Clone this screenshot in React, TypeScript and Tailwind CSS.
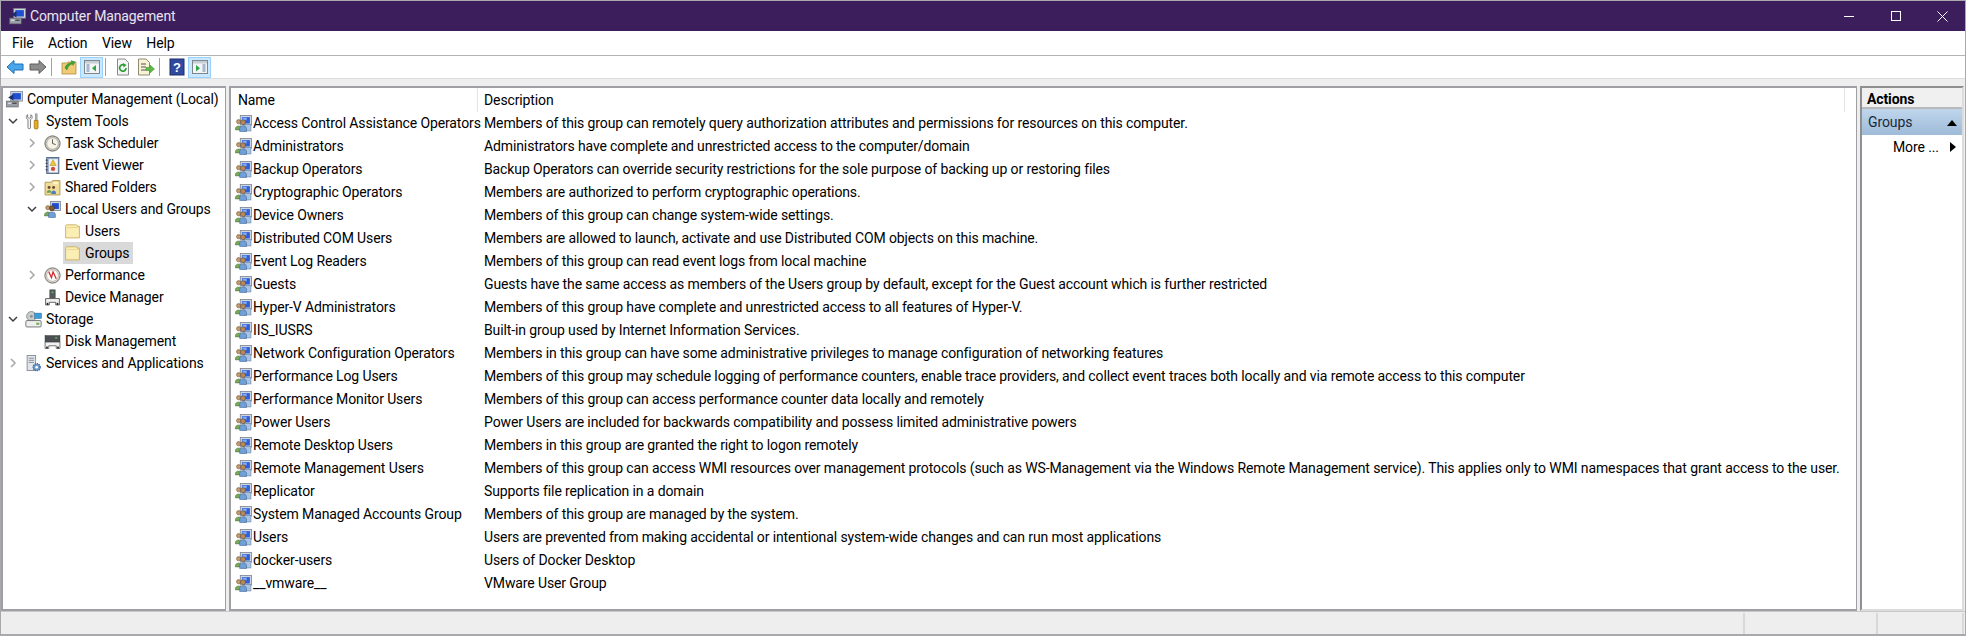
import React from "react";

const S = 17;

const GroupIcon = () => (
  <svg width={S} height={S} viewBox="0 0 16 16" className="shrink-0">
    <rect x="5" y="0.5" width="10.5" height="9" fill="#cfd6e0" stroke="#7f8794" strokeWidth="0.8" />
    <rect x="6.5" y="2" width="7.5" height="6" fill="#2f5fd8" />
    <rect x="7" y="2.5" width="4" height="2.5" fill="#7fa8f5" />
    <rect x="8.5" y="9" width="6.5" height="6" fill="#a9c4e4" stroke="#6d87a8" strokeWidth="0.6" />
    <circle cx="3.4" cy="6.3" r="2" fill="#c39a6b" stroke="#6e5136" strokeWidth="0.5" />
    <path d="M0.3 13 C0.3 9.5 6.6 9.5 6.6 13 V14 H0.3Z" fill="#78a85a" stroke="#4f7238" strokeWidth="0.5" />
    <circle cx="7.6" cy="6.8" r="2.3" fill="#b98a5a" stroke="#5d4329" strokeWidth="0.5" />
    <path d="M4.4 15.5 V12.5 C4.4 9.6 10.8 9.6 10.8 12.5 V15.5Z" fill="#6fa0d8" stroke="#3c5f8c" strokeWidth="0.5" />
  </svg>
);

const ComputerIcon = () => (
  <svg width={S} height={S} viewBox="0 0 16 16" className="shrink-0">
    <rect x="4.5" y="0.5" width="11" height="9" fill="#cfd6e0" stroke="#7f8794" strokeWidth="0.8" />
    <rect x="6" y="2" width="8" height="6" fill="#1f4fd0" />
    <path d="M2 6 L7 3 L7 9 Z" fill="#1d2f6b" />
    <rect x="0.5" y="9.5" width="11" height="5.5" fill="#9aa0a8" stroke="#55585e" strokeWidth="0.6" />
    <rect x="2" y="11" width="3" height="1" fill="#eee" />
    <rect x="6" y="11" width="4" height="1" fill="#333" />
  </svg>
);

const ToolsIcon = () => (
  <svg width={S} height={S} viewBox="0 0 16 16" className="shrink-0">
    <path d="M2.5 1.5 L2.5 4 L4 5 L5.5 4 L5.5 1.5 C7.5 3 7 5.5 5.2 6.2 V14 C5.2 15 2.8 15 2.8 14 V6.2 C1 5.5 0.5 3 2.5 1.5Z" fill="#f4f4f4" stroke="#6d6d6d" strokeWidth="0.8" />
    <rect x="9.6" y="0.8" width="1.8" height="6" fill="#aeb4ba" stroke="#6d6d6d" strokeWidth="0.4" />
    <path d="M8.7 7 H12.3 V14.2 C12.3 15.4 8.7 15.4 8.7 14.2Z" fill="#e9ad17" stroke="#8a6208" strokeWidth="0.6" />
  </svg>
);

const ClockIcon = () => (
  <svg width={S} height={S} viewBox="0 0 16 16" className="shrink-0">
    <circle cx="8" cy="8" r="7.2" fill="#c8c3b4" stroke="#6f6f6f" strokeWidth="0.9" />
    <circle cx="8" cy="8" r="5.4" fill="#f7f3e6" stroke="#9a9a9a" strokeWidth="0.5" />
    <path d="M8 4 V8 L11 9" fill="none" stroke="#555" strokeWidth="0.9" />
  </svg>
);

const EventIcon = () => (
  <svg width={S} height={S} viewBox="0 0 16 16" className="shrink-0">
    <rect x="2.5" y="0.5" width="11.5" height="15" fill="#8fa7c6" stroke="#4c5f7a" strokeWidth="0.8" />
    <rect x="4.5" y="2" width="8.5" height="12.5" fill="#f3f3f3" />
    <path d="M1.5 3 H3.5 M1.5 6 H3.5 M1.5 9 H3.5 M1.5 12 H3.5" stroke="#333" strokeWidth="0.8" />
    <path d="M8.5 2.5 L11.5 8 H5.5Z" fill="#f1c232" stroke="#a07c10" strokeWidth="0.4" />
    <circle cx="8.5" cy="11.2" r="2" fill="#d04a3f" />
  </svg>
);

const SharedIcon = () => (
  <svg width={S} height={S} viewBox="0 0 16 16" className="shrink-0">
    <path d="M1 3 H7 L8 1.5 H15 V15 H1Z" fill="#f0dc9a" stroke="#a88f4a" strokeWidth="0.8" />
    <rect x="9" y="3" width="4" height="2" fill="#fff6d0" />
    <circle cx="4.8" cy="8" r="1.4" fill="#6c4a2a" />
    <circle cx="9" cy="8" r="1.4" fill="#6c4a2a" />
    <path d="M2.5 13 C2.5 9.5 7 9.5 7 13Z" fill="#6da34f" />
    <path d="M6.8 14 C6.8 9.8 11.4 9.8 11.4 14Z" fill="#4b7fc0" />
  </svg>
);

const UsersGroupsIcon = () => (
  <svg width={S} height={S} viewBox="0 0 16 16" className="shrink-0">
    <rect x="6" y="0.5" width="9.5" height="8.5" fill="#cfd6e0" stroke="#7f8794" strokeWidth="0.8" />
    <rect x="7.5" y="2" width="6.5" height="5.5" fill="#1f4fd0" />
    <circle cx="3.6" cy="6.3" r="2" fill="#c39a6b" stroke="#6e5136" strokeWidth="0.5" />
    <path d="M0.5 13 C0.5 9.5 6.8 9.5 6.8 13 V14 H0.5Z" fill="#78a85a" stroke="#4f7238" strokeWidth="0.5" />
    <circle cx="7.5" cy="6.8" r="2.4" fill="#7b5a3a" stroke="#4c3722" strokeWidth="0.5" />
    <path d="M4.3 15.5 V12.5 C4.3 9.6 10.7 9.6 10.7 12.5 V15.5Z" fill="#6fa0d8" stroke="#3c5f8c" strokeWidth="0.5" />
  </svg>
);

const FolderIcon = () => (
  <svg width={S} height={S} viewBox="0 0 16 16" className="shrink-0">
    <path d="M1.5 3 C1.5 2 2 1.7 3 1.7 H11 C12 1.7 12.5 2 12.5 3 H14.5 V14 H1.5Z" fill="#fbeeb4" stroke="#c8ab5b" strokeWidth="0.8" />
    <path d="M2.2 4.2 H13.8" stroke="#e4cc80" strokeWidth="0.6" />
  </svg>
);

const PerfIcon = () => (
  <svg width={S} height={S} viewBox="0 0 16 16" className="shrink-0">
    <circle cx="8" cy="8" r="7.2" fill="#d9d3c6" stroke="#6f6f6f" strokeWidth="0.9" />
    <circle cx="8" cy="8" r="5.4" fill="#fbfbfb" stroke="#a0a0a0" strokeWidth="0.5" />
    <path d="M4.5 4.5 L7 10 L8.5 4.5 L11.5 11" fill="none" stroke="#d22d2d" strokeWidth="1.2" />
  </svg>
);

const DeviceIcon = () => (
  <svg width={S} height={S} viewBox="0 0 16 16" className="shrink-0">
    <rect x="5.5" y="0.8" width="5" height="8" fill="#555a5e" stroke="#2f3336" strokeWidth="0.5" />
    <rect x="7.2" y="2.4" width="1.6" height="1.4" fill="#62c662" />
    <path d="M1.5 15 V9 H14.5 V15 H11 V12.5 H5 V15Z" fill="#f2f2f2" stroke="#4d4d4d" strokeWidth="0.8" />
    <rect x="2.5" y="13" width="1.6" height="2" fill="#222" />
    <rect x="11.9" y="13" width="1.6" height="2" fill="#222" />
  </svg>
);

const StorageIcon = () => (
  <svg width={S} height={S} viewBox="0 0 16 16" className="shrink-0">
    <circle cx="6" cy="5" r="4.5" fill="#c8ccc9" stroke="#7a7f7c" strokeWidth="0.7" />
    <circle cx="6" cy="5" r="1.3" fill="#8a8f8c" />
    <rect x="9" y="2" width="6.5" height="5" fill="#3c9bd8" stroke="#2b6f9c" strokeWidth="0.5" />
    <rect x="0.8" y="9" width="14.4" height="6" rx="1" fill="#eef0ee" stroke="#666" strokeWidth="0.8" />
    <rect x="10.5" y="11" width="3" height="2" fill="#79b25f" />
  </svg>
);

const DiskIcon = () => (
  <svg width={S} height={S} viewBox="0 0 16 16" className="shrink-0">
    <rect x="1" y="2.5" width="14" height="6" fill="#4a4f52" stroke="#2f3336" strokeWidth="0.5" />
    <rect x="10.5" y="4" width="2" height="1.2" fill="#62c662" />
    <path d="M1 8.5 H15 V14.5 H11.5 V12 H4.5 V14.5 H1Z" fill="#f2f2f2" stroke="#4d4d4d" strokeWidth="0.7" />
    <rect x="2" y="12.8" width="1.6" height="1.7" fill="#222" />
    <rect x="12.4" y="12.8" width="1.6" height="1.7" fill="#222" />
  </svg>
);

const ServicesIcon = () => (
  <svg width={S} height={S} viewBox="0 0 16 16" className="shrink-0">
    <rect x="2" y="0.5" width="8" height="14" fill="#e3e6ea" stroke="#7b838c" strokeWidth="0.8" />
    <path d="M3.5 3 H8.5 M3.5 5 H8.5 M3.5 7 H8.5" stroke="#7b838c" strokeWidth="0.8" />
    <circle cx="11" cy="11.5" r="3.3" fill="#6f9fd0" stroke="#3c6594" strokeWidth="1.2" strokeDasharray="1.2 0.7" />
    <circle cx="11" cy="11.5" r="1.2" fill="#fff" />
  </svg>
);

const Chevron = ({ open, hidden }: { open?: boolean; hidden?: boolean }) => (
  <span className="w-4 h-4 shrink-0 flex items-center justify-center">
    {hidden ? null : open ? (
      <svg width="12" height="12" viewBox="0 0 12 12">
        <path d="M2 4 L6 8 L10 4" fill="none" stroke="#3f3f3f" strokeWidth="1.5" />
      </svg>
    ) : (
      <svg width="12" height="12" viewBox="0 0 12 12">
        <path d="M4 2 L8 6 L4 10" fill="none" stroke="#a6a6a6" strokeWidth="1.5" />
      </svg>
    )}
  </span>
);

const ToolBtn = ({ children, active }: { children: React.ReactNode; active?: boolean }) => (
  <div className={active ? "w-[23px] h-[21px] flex items-center justify-center bg-[#cce8ff] border border-[#99d1ff]" : "w-[23px] h-[21px] flex items-center justify-center border border-transparent"}>
    {children}
  </div>
);

const Sep = () => <div className="w-px h-[18px] bg-[#a0a0a0] ml-[2px] mr-[5px]" />;

const PaneIcon = ({ side }: { side: "left" | "right" }) => (
  <svg width="16" height="16" viewBox="0 0 16 16">
    <rect x="0.5" y="1.5" width="15" height="13" fill="#f2f4f6" stroke="#7d8790" />
    <rect x="1" y="2" width="14" height="2.5" fill="#c7ced6" />
    {side === "left" ? (
      <>
        <path d="M2.5 6 H5.5 M2.5 8 H5.5 M2.5 10 H5.5 M2.5 12 H5.5" stroke="#5f7fa8" strokeWidth="1" />
        <path d="M12 6 V12.5 L8 9.2Z" fill="#2fa24a" />
      </>
    ) : (
      <>
        <path d="M4 6 V12.5 L8 9.2Z" fill="#2fa24a" />
        <path d="M10.5 6 H13.5 M10.5 8 H13.5 M10.5 10 H13.5 M10.5 12 H13.5" stroke="#5f7fa8" strokeWidth="1" />
      </>
    )}
  </svg>
);

const tree: { label: string; depth: number; chev: "open" | "closed" | "none"; icon: React.ReactNode; sel?: boolean }[] = [
  { label: "System Tools", depth: 0, chev: "open", icon: <ToolsIcon /> },
  { label: "Task Scheduler", depth: 1, chev: "closed", icon: <ClockIcon /> },
  { label: "Event Viewer", depth: 1, chev: "closed", icon: <EventIcon /> },
  { label: "Shared Folders", depth: 1, chev: "closed", icon: <SharedIcon /> },
  { label: "Local Users and Groups", depth: 1, chev: "open", icon: <UsersGroupsIcon /> },
  { label: "Users", depth: 2, chev: "none", icon: <FolderIcon /> },
  { label: "Groups", depth: 2, chev: "none", icon: <FolderIcon />, sel: true },
  { label: "Performance", depth: 1, chev: "closed", icon: <PerfIcon /> },
  { label: "Device Manager", depth: 1, chev: "none", icon: <DeviceIcon /> },
  { label: "Storage", depth: 0, chev: "open", icon: <StorageIcon /> },
  { label: "Disk Management", depth: 1, chev: "none", icon: <DiskIcon /> },
  { label: "Services and Applications", depth: 0, chev: "closed", icon: <ServicesIcon /> },
];

const depthClass = ["pl-[2px]", "pl-[21px]", "pl-[41px]"];

const groups: [string, string][] = [
  ["Access Control Assistance Operators", "Members of this group can remotely query authorization attributes and permissions for resources on this computer."],
  ["Administrators", "Administrators have complete and unrestricted access to the computer/domain"],
  ["Backup Operators", "Backup Operators can override security restrictions for the sole purpose of backing up or restoring files"],
  ["Cryptographic Operators", "Members are authorized to perform cryptographic operations."],
  ["Device Owners", "Members of this group can change system-wide settings."],
  ["Distributed COM Users", "Members are allowed to launch, activate and use Distributed COM objects on this machine."],
  ["Event Log Readers", "Members of this group can read event logs from local machine"],
  ["Guests", "Guests have the same access as members of the Users group by default, except for the Guest account which is further restricted"],
  ["Hyper-V Administrators", "Members of this group have complete and unrestricted access to all features of Hyper-V."],
  ["IIS_IUSRS", "Built-in group used by Internet Information Services."],
  ["Network Configuration Operators", "Members in this group can have some administrative privileges to manage configuration of networking features"],
  ["Performance Log Users", "Members of this group may schedule logging of performance counters, enable trace providers, and collect event traces both locally and via remote access to this computer"],
  ["Performance Monitor Users", "Members of this group can access performance counter data locally and remotely"],
  ["Power Users", "Power Users are included for backwards compatibility and possess limited administrative powers"],
  ["Remote Desktop Users", "Members in this group are granted the right to logon remotely"],
  ["Remote Management Users", "Members of this group can access WMI resources over management protocols (such as WS-Management via the Windows Remote Management service). This applies only to WMI namespaces that grant access to the user."],
  ["Replicator", "Supports file replication in a domain"],
  ["System Managed Accounts Group", "Members of this group are managed by the system."],
  ["Users", "Users are prevented from making accidental or intentional system-wide changes and can run most applications"],
  ["docker-users", "Users of Docker Desktop"],
  ["__vmware__", "VMware User Group"],
];

export default function App() {
  return (
    <div className="w-[1966px] h-[636px] flex flex-col overflow-hidden bg-[#eeeeee] border border-[#a9a9ad] border-b-2 text-[14px] tracking-[-0.115px] text-black font-['Roboto','Liberation_Sans',sans-serif]">
      {/* title bar */}
      <div className="h-[30px] shrink-0 bg-[#3c1e5c] flex items-center pl-[8px] text-white">
        <ComputerIcon />
        <span className="ml-[4px] pt-px flex-1 text-[#e9e4ef]">Computer Management</span>
        <div className="flex h-full">
          <div className="w-[46px] flex items-center justify-center pt-px">
            <div className="w-[10px] h-px bg-white" />
          </div>
          <div className="w-[46px] flex items-center justify-center ml-[1px]">
            <div className="w-[10px] h-[10px] border border-white" />
          </div>
          <div className="w-[46px] flex items-center justify-center">
            <svg width="11" height="11" viewBox="0 0 11 11">
              <path d="M0.5 0.5 L10.5 10.5 M10.5 0.5 L0.5 10.5" stroke="#fff" strokeWidth="1" />
            </svg>
          </div>
        </div>
      </div>
      {/* menu */}
      <div className="h-[25px] shrink-0 bg-white flex items-center pl-[11px] gap-[14.5px] border-b border-[#b4b4b4]">
        <span>File</span>
        <span>Action</span>
        <span>View</span>
        <span>Help</span>
      </div>
      {/* toolbar */}
      <div className="h-[23px] shrink-0 bg-white flex items-center pl-[2px] border-b border-[#dcdcdc]">
        <ToolBtn>
          <svg width="18" height="16" viewBox="0 0 18 16">
            <path d="M1 8 L8 1.5 V5 H17 V11 H8 V14.5Z" fill="#49a6ea" stroke="#1c6eb8" strokeWidth="1" />
          </svg>
        </ToolBtn>
        <ToolBtn>
          <svg width="18" height="16" viewBox="0 0 18 16">
            <path d="M17 8 L10 1.5 V5 H1 V11 H10 V14.5Z" fill="#8c8c8c" stroke="#5f5f5f" strokeWidth="1" />
          </svg>
        </ToolBtn>
        <Sep />
        <ToolBtn>
          <svg width="16" height="16" viewBox="0 0 16 16">
            <path d="M1 4 H6 L7 3 H15 V15 H1Z" fill="#eecb74" stroke="#b08d3c" strokeWidth="0.8" />
            <path d="M4 9 C5 5 8 4 11 3.5 L10 1.5 L14 3 L12 6.5 L11.5 5 C9 5.5 7 7 6 11Z" fill="#39a838" stroke="#257a25" strokeWidth="0.4" />
          </svg>
        </ToolBtn>
        <ToolBtn active>
          <PaneIcon side="left" />
        </ToolBtn>
        <Sep />
        <ToolBtn>
          <svg width="16" height="18" viewBox="0 0 16 18">
            <path d="M2.5 1 H10 L13.5 4.5 V17 H2.5Z" fill="#f4f4f4" stroke="#8a8a8a" />
            <path d="M11 10 A3.2 3.2 0 1 1 9.5 7.2" fill="none" stroke="#2f9e37" strokeWidth="1.8" />
            <path d="M8 5 L11.5 7 L8.5 9.5Z" fill="#2f9e37" />
          </svg>
        </ToolBtn>
        <ToolBtn>
          <svg width="18" height="18" viewBox="0 0 18 18">
            <path d="M1.5 1 H9 L12.5 4.5 V17 H1.5Z" fill="#f8f3d8" stroke="#8f8a6c" />
            <path d="M4 6 H9 M4 9 H9 M4 12 H9" stroke="#555" strokeWidth="1" />
            <path d="M9 9.5 H13 V7 L17.5 11 L13 15 V12.5 H9Z" fill="#5dbb43" stroke="#3d8a2a" strokeWidth="0.5" />
          </svg>
        </ToolBtn>
        <Sep />
        <ToolBtn>
          <svg width="16" height="18" viewBox="0 0 16 18">
            <rect x="1" y="1" width="14" height="16" fill="#2f4a9e" stroke="#1c2f6b" />
            <text x="8" y="14" textAnchor="middle" fontSize="13" fontWeight="700" fill="#fff" fontFamily="Liberation Sans">?</text>
          </svg>
        </ToolBtn>
        <ToolBtn active>
          <PaneIcon side="right" />
        </ToolBtn>
      </div>
      {/* body */}
      <div className="flex-1 min-h-0 flex pt-[7px] pr-[1px] gap-[3px] bg-[#eeeeee]">
        {/* tree */}
        <div className="w-[225px] shrink-0 bg-white border-2 border-[#a0a0a4] border-r overflow-hidden">
          <div className="h-[22px] flex items-center pl-[3px] gap-[4px] whitespace-nowrap">
            <ComputerIcon />
            <span>Computer Management (Local)</span>
          </div>
          {tree.map((t) => (
            <div key={t.label} className={`h-[22px] flex items-center whitespace-nowrap ${depthClass[t.depth]}`}>
              <Chevron open={t.chev === "open"} hidden={t.chev === "none"} />
              <div className={t.sel ? "flex items-center gap-[4px] bg-[#d9d9d9] h-[22px] pl-[1px] pr-[4px] ml-[3px]" : "flex items-center gap-[4px] h-[22px] pl-[1px] pr-[4px] ml-[3px]"}>
                {t.icon}
                <span>{t.label}</span>
              </div>
            </div>
          ))}
        </div>
        {/* list */}
        <div className="flex-1 min-w-0 bg-white border-2 border-[#a0a0a4] border-r overflow-hidden">
          <div className="h-[24px] flex items-center">
            <div className="w-[247px] pl-[7px] border-r border-[#e5e5e5] h-full flex items-center">Name</div>
            <div className="pl-[6px] flex-1 h-full flex items-center">Description</div>
            <div className="w-px h-full bg-[#e5e5e5] mr-[11px]" />
          </div>
          {groups.map(([n, d]) => (
            <div key={n} className="h-[23px] flex items-center whitespace-nowrap">
              <div className="w-[247px] shrink-0 flex items-center gap-[1px] pl-[4px]">
                <GroupIcon />
                <span>{n}</span>
              </div>
              <span className="pl-[6px]">{d}</span>
            </div>
          ))}
        </div>
        {/* actions */}
        <div className="w-[104px] shrink-0 bg-white border-2 border-[#8f8f92] border-r-[#dcdcdc] border-b-[#dcdcdc] overflow-hidden">
          <div className="h-[21px] pt-[3px] bg-[#f0f0f0] border-b-2 border-[#b9b9b9] flex items-center pl-[5px] font-bold">Actions</div>
          <div className="h-[26px] pt-px bg-gradient-to-b from-[#bfd6ec] to-[#9fbbd9] flex items-center justify-between pl-[6px] pr-[5px] text-[#1a2a3a]">
            <span>Groups</span>
            <svg width="10" height="6" viewBox="0 0 10 6">
              <path d="M5 0 L10 6 H0Z" fill="#000" />
            </svg>
          </div>
          <div className="h-[24px] flex items-center justify-between pl-[31px] pr-[6px]">
            <span>More ...</span>
            <svg width="6" height="10" viewBox="0 0 6 10">
              <path d="M0 0 L6 5 L0 10Z" fill="#000" />
            </svg>
          </div>
        </div>
      </div>
      {/* status */}
      <div className="h-[23px] shrink-0 bg-[#eeeeee] border-t border-[#c8c8c8] flex justify-end pr-[1px] pt-[1px]">
        <div className="w-[133px] border-l-2 border-[#d8d8d8]" />
        <div className="w-[88px] border-l-2 border-r-2 border-[#d8d8d8]" />
      </div>
    </div>
  );
}
